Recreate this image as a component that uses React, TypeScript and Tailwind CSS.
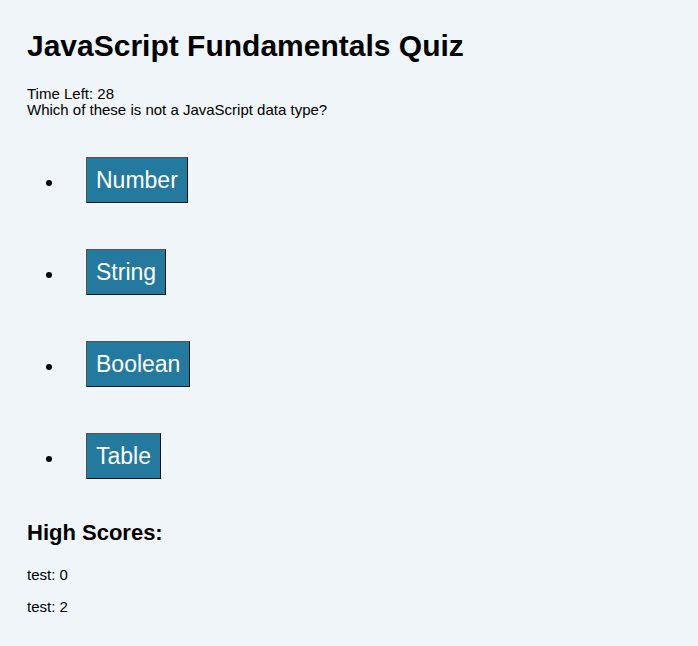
import React from "react";

const options = ["Number", "String", "Boolean", "Table"];

export default function App() {
  return (
    <div className="min-h-[646px] w-full bg-[#f0f5f9] text-black pl-[27px] pt-[28px] font-['Liberation_Sans',Arial,sans-serif]">
      <h1 className="text-[30px] leading-[35px] font-bold">JavaScript Fundamentals Quiz</h1>
      <div className="mt-[23px] text-[15px] leading-[16px]">
        <div>Time Left: 28</div>
        <div>Which of these is not a JavaScript data type?</div>
      </div>
      <ul className="list-disc pl-[37px] mt-[39px] flex flex-col gap-[46px]">
        {options.map((o) => (
          <li key={o} className="text-[19px] leading-[20px]">
            <button className="ml-[22px] align-baseline bg-[#23799e] text-white text-[23px] leading-[26px] px-[9px] py-[9px] border border-t-[#555] border-l-[#555] border-b-[#111] border-r-[#111]">
              {o}
            </button>
          </li>
        ))}
      </ul>
      <h2 className="mt-[41px] text-[22px] leading-[25px] font-bold">High Scores:</h2>
      <div className="mt-[21px] text-[15px] leading-[17px] flex flex-col gap-[15px]">
        <p>test: 0</p>
        <p>test: 2</p>
      </div>
    </div>
  );
}
